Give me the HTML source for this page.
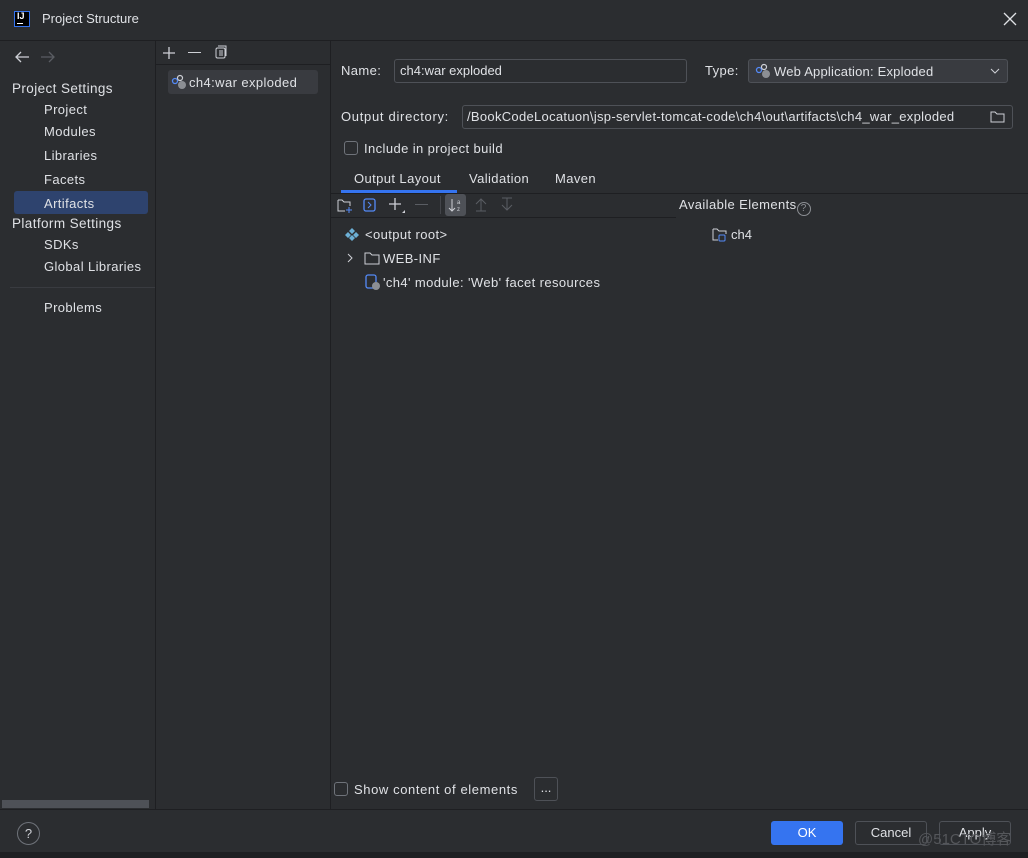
<!DOCTYPE html>
<html><head><meta charset="utf-8"><style>
*{box-sizing:border-box;margin:0;padding:0}
body{width:1028px;height:858px;background:#2b2d30;font-family:"Liberation Sans",sans-serif;font-size:13px;color:#dfe1e5;position:relative;overflow:hidden}
.a{position:absolute;white-space:nowrap}
.line{position:absolute;background:#1e1f22}
.box{position:absolute;border:1px solid #4e5157;border-radius:3px;background:#2b2d30}
.cb{position:absolute;width:14px;height:14px;border:1px solid #6f737a;border-radius:3px}
.w{letter-spacing:0.4px}
</style></head><body>
<!-- title -->
<div class="a" style="left:14px;top:11px;width:16px;height:16px;border:1px solid #3574f0;background:#000"></div>
<div class="a" style="left:17px;top:11px;font-size:9px;font-weight:bold;color:#fff">IJ</div>
<div class="a" style="left:17px;top:23px;width:6px;height:1px;background:#fff"></div>
<div class="a" style="left:42px;top:11px;font-size:13px">Project Structure</div>
<svg class="a" style="left:1003px;top:12px" width="14" height="14"><path d="M1 1L13 13M13 1L1 13" stroke="#dfe1e5" stroke-width="1.3"/></svg>
<div class="line" style="left:0;top:40px;width:1028px;height:1px"></div>
<!-- left sidebar -->
<div class="line" style="left:155px;top:41px;width:1px;height:768px"></div>
<svg class="a" style="left:14px;top:51px" width="16" height="12"><path d="M15 6H2M7 1L2 6L7 11" stroke="#ced0d6" fill="none" stroke-width="1.3"/></svg>
<svg class="a" style="left:40px;top:51px" width="16" height="12"><path d="M1 6H14M9 1L14 6L9 11" stroke="#5a5d63" fill="none" stroke-width="1.3"/></svg>
<div class="a w" style="left:12px;top:81px;font-size:13.5px">Project Settings</div>
<div class="a w" style="left:44px;top:102px">Project</div>
<div class="a w" style="left:44px;top:124px">Modules</div>
<div class="a w" style="left:44px;top:148px">Libraries</div>
<div class="a w" style="left:44px;top:172px">Facets</div>
<div class="a" style="left:14px;top:191px;width:134px;height:23px;background:#2e436e;border-radius:3px"></div>
<div class="a w" style="left:44px;top:196px">Artifacts</div>
<div class="a w" style="left:12px;top:216px;font-size:13.5px">Platform Settings</div>
<div class="a w" style="left:44px;top:237px">SDKs</div>
<div class="a w" style="left:44px;top:259px">Global Libraries</div>
<div class="line" style="left:10px;top:287px;width:145px;height:1px;background:#393b40"></div>
<div class="a w" style="left:44px;top:300px">Problems</div>
<div class="a" style="left:2px;top:800px;width:147px;height:8px;background:#4e5157"></div>
<!-- middle -->
<div class="line" style="left:330px;top:41px;width:1px;height:768px"></div>
<svg class="a" style="left:162px;top:46px" width="14" height="14"><path d="M7 1V13M1 7H13" stroke="#ced0d6" stroke-width="1.3"/></svg>
<div class="a" style="left:188px;top:52px;width:13px;height:1.3px;background:#ced0d6"></div>
<svg class="a" style="left:214px;top:45px" width="14" height="14"><rect x="2" y="3" width="9" height="10" rx="1.5" fill="none" stroke="#ced0d6"/><path d="M4 1H12V11M5 6H9M5 8H9M5 10H9" stroke="#ced0d6" fill="none"/></svg>
<div class="line" style="left:156px;top:64px;width:174px;height:1px"></div>
<div class="a" style="left:168px;top:70px;width:150px;height:24px;background:#393b40;border-radius:3px"></div>
<svg class="a" style="left:171px;top:74px" width="16" height="16"><circle cx="4" cy="7" r="2.5" fill="none" stroke="#548af7" stroke-width="1.3"/><circle cx="9" cy="4" r="2.5" fill="none" stroke="#ced0d6" stroke-width="1.2"/><circle cx="11" cy="11" r="4" fill="#8c8f94"/></svg>
<div class="a w" style="left:189px;top:75px">ch4:war exploded</div>
<!-- right -->
<div class="a w" style="left:341px;top:63px">Name:</div>
<div class="box" style="left:394px;top:59px;width:293px;height:24px"></div>
<div class="a" style="left:400px;top:63px">ch4:war exploded</div>
<div class="a w" style="left:705px;top:63px">Type:</div>
<div class="box" style="left:748px;top:59px;width:260px;height:24px;background:#393b40"></div>
<svg class="a" style="left:755px;top:63px" width="16" height="16"><circle cx="4" cy="7" r="2.5" fill="none" stroke="#548af7" stroke-width="1.3"/><circle cx="9" cy="4" r="2.5" fill="none" stroke="#ced0d6" stroke-width="1.2"/><circle cx="11" cy="11" r="4" fill="#8c8f94"/></svg>
<div class="a w" style="left:774px;top:64px;letter-spacing:0.2px">Web Application: Exploded</div>
<svg class="a" style="left:990px;top:68px" width="10" height="6"><path d="M1 1L5 5L9 1" stroke="#ced0d6" fill="none"/></svg>
<div class="a w" style="left:341px;top:109px;letter-spacing:0.7px">Output directory:</div>
<div class="box" style="left:462px;top:105px;width:551px;height:24px"></div>
<div class="a" style="left:467px;top:109px;letter-spacing:0.3px">/BookCodeLocatuon\jsp-servlet-tomcat-code\ch4\out\artifacts\ch4_war_exploded</div>
<svg class="a" style="left:990px;top:110px" width="15" height="13"><path d="M1 2H5L7 4H14V12H1Z" stroke="#ced0d6" fill="none"/></svg>
<div class="cb" style="left:344px;top:141px"></div>
<div class="a w" style="left:364px;top:141px">Include in project build</div>
<div class="a w" style="left:354px;top:171px">Output Layout</div>
<div class="a w" style="left:469px;top:171px">Validation</div>
<div class="a w" style="left:555px;top:171px">Maven</div>
<div class="a" style="left:341px;top:190px;width:116px;height:3px;background:#3574f0"></div>
<div class="line" style="left:331px;top:193px;width:697px;height:1px"></div>
<svg class="a" style="left:336px;top:197px" width="18" height="18"><path d="M2 3H6L8 5H14V9M9 14H2V3" stroke="#ced0d6" fill="none"/><path d="M13 10V16M10 13H16" stroke="#548af7"/></svg>
<svg class="a" style="left:362px;top:197px" width="16" height="16"><rect x="2" y="2" width="11" height="12" rx="2" fill="none" stroke="#548af7" stroke-width="1.3"/><path d="M6 5L9 8L6 11" stroke="#548af7" fill="none"/></svg>
<svg class="a" style="left:388px;top:197px" width="18" height="18"><path d="M7 1V13M1 7H13" stroke="#ced0d6" stroke-width="1.3"/><path d="M14 16H17V13Z" fill="#ced0d6"/></svg>
<div class="a" style="left:415px;top:204px;width:13px;height:1px;background:#5a5d63"></div>
<div class="a" style="left:440px;top:196px;width:1px;height:18px;background:#43454a"></div>
<div class="a" style="left:445px;top:194px;width:21px;height:22px;background:#4e5157;border-radius:3px"></div>
<svg class="a" style="left:448px;top:197px" width="16" height="16"><path d="M4 2V14M1 11L4 14L7 11" stroke="#ced0d6" fill="none"/><text x="9" y="7" font-size="6" fill="#ced0d6" font-family="Liberation Sans">a</text><text x="9" y="14" font-size="6" fill="#ced0d6" font-family="Liberation Sans">z</text></svg>
<svg class="a" style="left:474px;top:197px" width="14" height="16"><path d="M7 2V14M2 7L7 2L12 7M2 14H12" stroke="#5a5d63" fill="none"/></svg>
<svg class="a" style="left:500px;top:197px" width="14" height="16"><path d="M7 1V13M2 8L7 13L12 8M2 1H12" stroke="#5a5d63" fill="none"/></svg>
<div class="line" style="left:331px;top:217px;width:345px;height:1px"></div>
<div class="a w" style="left:679px;top:197px">Available Elements<span style="display:inline-block;width:14px;height:14px;border:1px solid #8c8f94;border-radius:50%;font-size:10px;text-align:center;line-height:12px;color:#8c8f94;vertical-align:-2px;letter-spacing:0">?</span></div>
<svg class="a" style="left:345px;top:227px" width="14" height="14"><path d="M7 1L10 4L7 7L4 4ZM3 5L6 8L3 11L0 8ZM11 5L14 8L11 11L8 8ZM7 8L10 11L7 14L4 11Z" fill="#6cb0d6"/></svg>
<div class="a w" style="left:365px;top:227px">&lt;output root&gt;</div>
<svg class="a" style="left:345px;top:253px" width="10" height="10"><path d="M3 1L7 5L3 9" stroke="#ced0d6" fill="none"/></svg>
<svg class="a" style="left:364px;top:251px" width="16" height="14"><path d="M1 2H6L8 4H15V13H1Z" stroke="#ced0d6" fill="none"/></svg>
<div class="a w" style="left:383px;top:251px">WEB-INF</div>
<svg class="a" style="left:365px;top:274px" width="16" height="17"><rect x="1" y="1" width="10" height="13" rx="2" fill="none" stroke="#548af7" stroke-width="1.3"/><circle cx="11" cy="12" r="4" fill="#8c8f94"/></svg>
<div class="a w" style="left:383px;top:275px">'ch4' module: 'Web' facet resources</div>
<svg class="a" style="left:712px;top:227px" width="16" height="16"><path d="M1 2H5L7 4H14V7M6 13H1V2" stroke="#ced0d6" fill="none"/><rect x="7" y="8" width="6" height="6" rx="1" fill="none" stroke="#548af7"/></svg>
<div class="a" style="left:731px;top:227px">ch4</div>
<div class="cb" style="left:334px;top:782px"></div>
<div class="a w" style="left:354px;top:782px;letter-spacing:0.6px">Show content of elements</div>
<div class="box" style="left:534px;top:777px;width:24px;height:24px;text-align:center;line-height:20px">...</div>
<!-- bottom -->
<div class="line" style="left:0;top:809px;width:1028px;height:1px"></div>
<div class="a" style="left:17px;top:822px;width:23px;height:23px;border:1px solid #6f737a;border-radius:50%;text-align:center;line-height:21px;color:#ced0d6">?</div>
<div class="a" style="left:771px;top:821px;width:72px;height:24px;background:#3574f0;border-radius:3px;text-align:center;line-height:24px;color:#fff">OK</div>
<div class="box" style="left:855px;top:821px;width:72px;height:24px;text-align:center;line-height:22px">Cancel</div>
<div class="box" style="left:939px;top:821px;width:72px;height:24px;text-align:center;line-height:22px">Apply</div>
<div class="a" style="left:918px;top:828px;color:#55575b;font-size:15px;font-family:'Liberation Sans','Noto Sans CJK SC',sans-serif">@51CTO博客</div>
<div class="a" style="left:0;top:852px;width:1028px;height:6px;background:#1e1f22"></div>
</body></html>
